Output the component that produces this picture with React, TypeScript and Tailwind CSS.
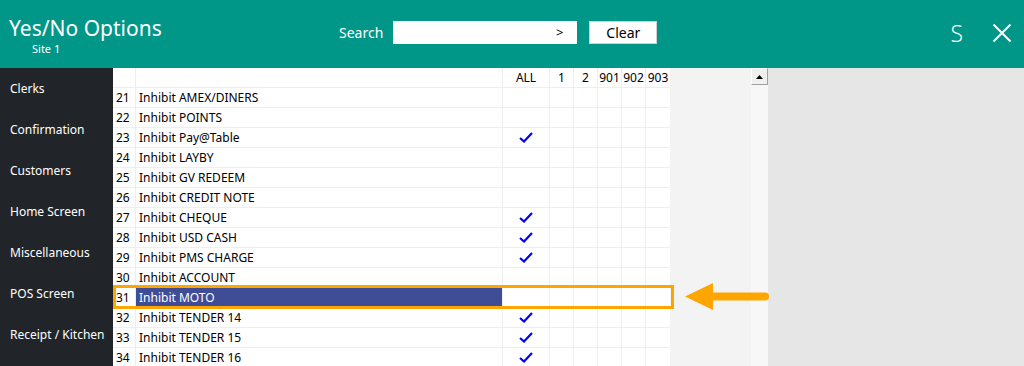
import React from "react";

const rows: { n: number; name: string; all: boolean }[] = [
  { n: 21, name: "Inhibit AMEX/DINERS", all: false },
  { n: 22, name: "Inhibit POINTS", all: false },
  { n: 23, name: "Inhibit Pay@Table", all: true },
  { n: 24, name: "Inhibit LAYBY", all: false },
  { n: 25, name: "Inhibit GV REDEEM", all: false },
  { n: 26, name: "Inhibit CREDIT NOTE", all: false },
  { n: 27, name: "Inhibit CHEQUE", all: true },
  { n: 28, name: "Inhibit USD CASH", all: true },
  { n: 29, name: "Inhibit PMS CHARGE", all: true },
  { n: 30, name: "Inhibit ACCOUNT", all: false },
  { n: 31, name: "Inhibit MOTO", all: false },
  { n: 32, name: "Inhibit TENDER 14", all: true },
  { n: 33, name: "Inhibit TENDER 15", all: true },
  { n: 34, name: "Inhibit TENDER 16", all: true },
];

const side = ["Clerks", "Confirmation", "Customers", "Home Screen", "Miscellaneous", "POS Screen", "Receipt / Kitchen"];
const cols = ["1", "2", "901", "902", "903"];

function Check() {
  return (
    <svg width="14" height="11" viewBox="0 0 14 11">
      <path d="M1 6 L5 9.5 L13 1" fill="none" stroke="#0000ff" strokeWidth="2.2" />
    </svg>
  );
}

export default function App() {
  const font = { fontFamily: '"Noto Sans", "Open Sans", sans-serif' };
  return (
    <div className="w-[1024px] h-[366px] overflow-hidden flex flex-col bg-white" style={font}>
      {/* Header */}
      <div className="h-[68px] bg-[#009688] flex items-start text-white shrink-0">
        <div className="w-[339px] pl-[9px] pt-[17px]">
          <div className="text-[21px] leading-[22px]">Yes/No Options</div>
          <div className="text-[11px] leading-[13px] pl-[23px] mt-[3px]">Site 1</div>
        </div>
        <div className="flex items-center pt-[21px]">
          <span className="text-[14px] mr-[10px] leading-[23px]">Search</span>
          <div className="w-[184px] h-[23px] bg-white text-black text-[13px] flex items-center justify-end pr-[14px]">&gt;</div>
          <div className="ml-[12px] w-[68px] h-[23px] bg-white border border-[#d0d0d0] text-black text-[14px] flex items-center justify-center">Clear</div>
        </div>
        <div className="flex-1" />
        <div className="flex items-center pt-[22px] pr-[12px]">
          <span className="text-[23px] leading-[22px] font-light">S</span>
          <svg className="ml-[29px]" width="20" height="20" viewBox="0 0 20 20">
            <path d="M1.5 1.5 L18.5 18.5 M18.5 1.5 L1.5 18.5" stroke="white" strokeWidth="2" />
          </svg>
        </div>
      </div>
      {/* Body */}
      <div className="flex flex-1 relative">
        <div className="w-[113px] bg-[#212529] text-white text-[12px] pl-[10px] pt-[12px] flex flex-col gap-[24px] shrink-0">
          {side.map((s) => (
            <div key={s} className="leading-[17px]">{s}</div>
          ))}
        </div>
        <div className="w-[557px] relative shrink-0 text-[12px] text-black">
          <div className="flex h-[20px] border-b border-[#eeeeee]">
            <div className="w-[23px] border-r border-[#eeeeee]" />
            <div className="w-[367px] border-r border-[#eeeeee]" />
            <div className="w-[47px] border-r border-[#eeeeee] flex items-center justify-center">ALL</div>
            {cols.map((c) => (
              <div key={c} className="w-[24px] border-r border-[#eeeeee] flex items-center justify-center last:border-r-0">{c}</div>
            ))}
          </div>
          {rows.map((r) => (
            <div key={r.n} className="flex h-[20px] border-b border-[#eeeeee]">
              <div className="w-[23px] border-r border-[#eeeeee] pl-[3px] flex items-center">{r.n}</div>
              <div className="w-[367px] border-r border-[#eeeeee] flex items-center">
                {r.n === 31 ? (
                  <div className="w-full h-full bg-[#3f4d97] text-white pl-[3px] flex items-center">{r.name}</div>
                ) : (
                  <span className="pl-[3px]">{r.name}</span>
                )}
              </div>
              <div className="w-[47px] border-r border-[#eeeeee] flex items-center justify-center">{r.all ? <Check /> : null}</div>
              {cols.map((c) => (
                <div key={c} className="w-[24px] border-r border-[#eeeeee] last:border-r-0" />
              ))}
            </div>
          ))}
          <div className="absolute left-0 top-[217px] w-[561px] h-[24px] border-[3px] border-[#ffa500]" />
        </div>
        <div className="w-[81px] bg-[#f3f3f3] shrink-0" />
        <div className="w-[17px] bg-[#f7f7f7] shrink-0 flex flex-col">
          <div className="h-[17px] bg-[#f0f0f0] border border-t-white border-l-white border-r-[#a0a0a0] border-b-[#a0a0a0] flex items-center justify-center">
            <svg width="7" height="4" viewBox="0 0 7 4"><path d="M0 4 L3.5 0 L7 4 Z" fill="black" /></svg>
          </div>
        </div>
        <div className="flex-1 bg-[#e6e6e6]" />
        <svg className="absolute left-[684px] top-[214px]" width="88" height="32" viewBox="0 0 88 32">
          <path d="M1 14.5 L29 1 L29 28 Z" fill="#ffa500" />
          <path d="M27 14.5 L81 14.5" stroke="#ffa500" strokeWidth="8" strokeLinecap="round" />
        </svg>
      </div>
    </div>
  );
}
